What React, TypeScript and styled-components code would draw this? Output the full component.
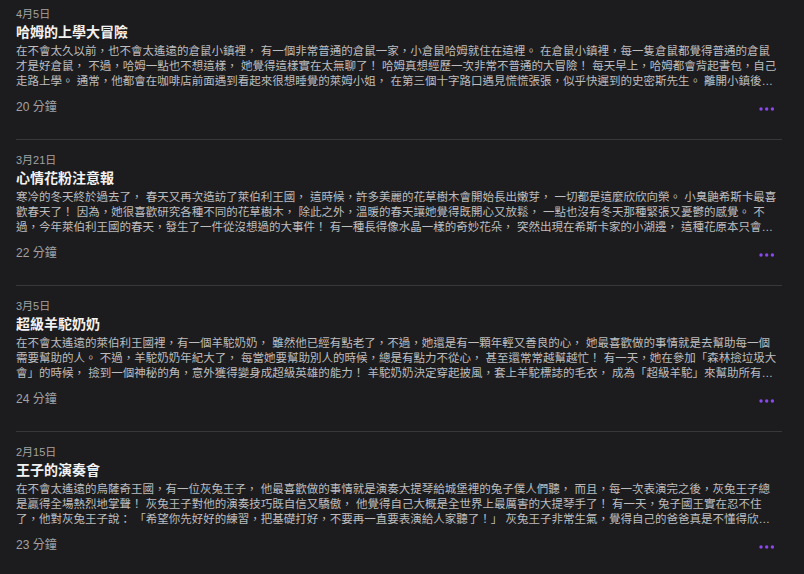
import React from 'react';
import styled, { createGlobalStyle } from 'styled-components';

interface Story {
  date: string;
  title: string;
  summary: string;
  minutes: number;
}

const stories: Story[] = [
  {
    date: '4月5日',
    title: '哈姆的上學大冒險',
    summary:
      '在不會太久以前，也不會太遙遠的倉鼠小鎮裡， 有一個非常普通的倉鼠一家，小倉鼠哈姆就住在這裡。 在倉鼠小鎮裡，每一隻倉鼠都覺得普通的倉鼠才是好倉鼠， 不過，哈姆一點也不想這樣， 她覺得這樣實在太無聊了！ 哈姆真想經歷一次非常不普通的大冒險！ 每天早上，哈姆都會背起書包，自己走路上學。 通常，他都會在咖啡店前面遇到看起來很想睡覺的萊姆小姐， 在第三個十字路口遇見慌慌張張，似乎快遲到的史密斯先生。 離開小鎮後，哈姆會經過一片大大的森林，森林裡住著許多奇妙的動物。',
    minutes: 20,
  },
  {
    date: '3月21日',
    title: '心情花粉注意報',
    summary:
      '寒冷的冬天終於過去了， 春天又再次造訪了萊伯利王國， 這時候，許多美麗的花草樹木會開始長出嫩芽， 一切都是這麼欣欣向榮。 小臭鼬希斯卡最喜歡春天了！ 因為，她很喜歡研究各種不同的花草樹木， 除此之外，溫暖的春天讓她覺得既開心又放鬆， 一點也沒有冬天那種緊張又憂鬱的感覺。 不過，今年萊伯利王國的春天，發生了一件從沒想過的大事件！ 有一種長得像水晶一樣的奇妙花朵， 突然出現在希斯卡家的小湖邊， 這種花原本只會出現在很遠很遠的北方山谷裡。',
    minutes: 22,
  },
  {
    date: '3月5日',
    title: '超級羊駝奶奶',
    summary:
      '在不會太遙遠的萊伯利王國裡，有一個羊駝奶奶， 雖然他已經有點老了，不過，她還是有一顆年輕又善良的心， 她最喜歡做的事情就是去幫助每一個需要幫助的人。 不過，羊駝奶奶年紀大了， 每當她要幫助別人的時候，總是有點力不從心， 甚至還常常越幫越忙！ 有一天，她在參加「森林撿垃圾大會」的時候， 撿到一個神秘的角，意外獲得變身成超級英雄的能力！ 羊駝奶奶決定穿起披風，套上羊駝標誌的毛衣， 成為「超級羊駝」來幫助所有需要幫助的人。',
    minutes: 24,
  },
  {
    date: '2月15日',
    title: '王子的演奏會',
    summary:
      '在不會太遙遠的烏薩奇王國，有一位灰兔王子， 他最喜歡做的事情就是演奏大提琴給城堡裡的兔子僕人們聽， 而且，每一次表演完之後，灰兔王子總是贏得全場熱烈地掌聲！ 灰兔王子對他的演奏技巧既自信又驕傲， 他覺得自己大概是全世界上最厲害的大提琴手了！ 有一天，兔子國王實在忍不住了，他對灰兔王子說： 「希望你先好好的練習，把基礎打好，不要再一直要表演給人家聽了！」 灰兔王子非常生氣，覺得自己的爸爸真是不懂得欣賞他的音樂。',
    minutes: 23,
  },
];

const MoreIcon: React.FC = () => (
  <svg width="16" height="4" viewBox="0 0 16 4" aria-hidden="true">
    <circle cx="2" cy="2" r="1.7" fill="#8a48ee" />
    <circle cx="7.7" cy="2" r="1.7" fill="#8a48ee" />
    <circle cx="13.4" cy="2" r="1.7" fill="#8a48ee" />
  </svg>
);

const App: React.FC = () => {
  return (
    <>
      <GlobalStyle />
      <List>
        {stories.map((story) => (
          <Item key={story.title}>
            <DateLabel>{story.date}</DateLabel>
            <Title>{story.title}</Title>
            <Summary>{story.summary}</Summary>
            <Footer>
              <Duration>{story.minutes} 分鐘</Duration>
              <MoreButton type="button" aria-label="更多">
                <MoreIcon />
              </MoreButton>
            </Footer>
          </Item>
        ))}
      </List>
    </>
  );
};

export default App;

const GlobalStyle = createGlobalStyle`
  html, body {
    margin: 0;
    padding: 0;
    background: #1c1c1e;
  }

  body {
    font-family: "Liberation Sans", "Noto Sans CJK TC", sans-serif;
    color: #f2f2f2;
    -webkit-font-smoothing: antialiased;
  }
`;

const List = styled.ul`
  list-style: none;
  margin: 0;
  padding: 0 22px 0 16px;
`;

const Item = styled.li`
  padding: 13px 0 24px;
  border-bottom: 1px solid #38383a;

  &:first-child {
    padding-top: 7px;
  }
`;

const DateLabel = styled.div`
  font-size: 11px;
  line-height: 14px;
  color: #a2a2a4;
`;

const Title = styled.h2`
  margin: 1px 0 0;
  font-size: 14px;
  font-weight: 700;
  line-height: 20px;
  color: #f2f2f2;
`;

const Summary = styled.p`
  margin: 2px 0 0;
  padding-right: 2px;
  font-size: 11.5px;
  line-height: 15px;
  color: #bdbdbf;
  display: -webkit-box;
  -webkit-box-orient: vertical;
  -webkit-line-clamp: 3;
  overflow: hidden;
`;

const Footer = styled.div`
  display: flex;
  align-items: center;
  justify-content: space-between;
  margin-top: 10px;
  height: 16px;
`;

const Duration = styled.span`
  font-size: 12px;
  line-height: 16px;
  color: #a2a2a4;
`;

const MoreButton = styled.button`
  display: flex;
  align-items: center;
  padding: 0;
  margin: 3px 7px 0 0;
  border: none;
  background: none;
  cursor: pointer;
`;
